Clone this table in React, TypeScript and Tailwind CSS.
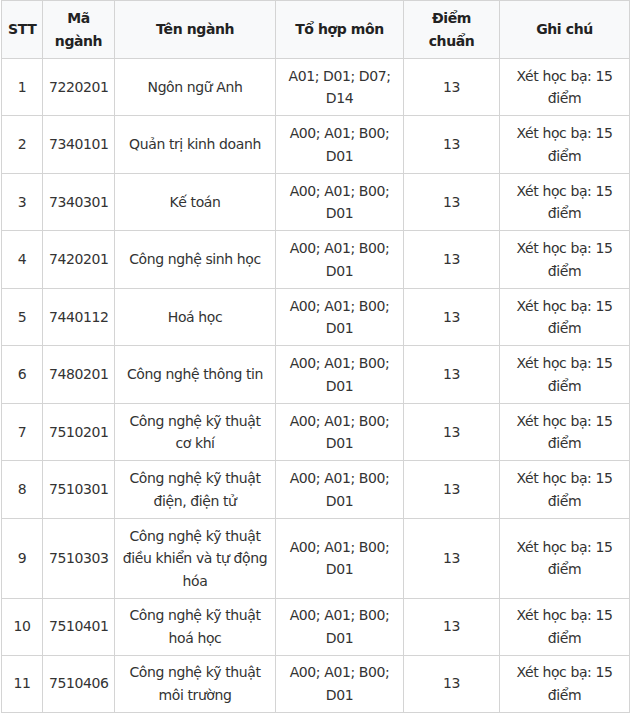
import React from 'react';

type Row = {
  stt: string;
  code: string;
  name: string[];
};

const rows: Row[] = [
  { stt: '1', code: '7220201', name: ['Ngôn ngữ Anh'] },
  { stt: '2', code: '7340101', name: ['Quản trị kinh doanh'] },
  { stt: '3', code: '7340301', name: ['Kế toán'] },
  { stt: '4', code: '7420201', name: ['Công nghệ sinh học'] },
  { stt: '5', code: '7440112', name: ['Hoá học'] },
  { stt: '6', code: '7480201', name: ['Công nghệ thông tin'] },
  { stt: '7', code: '7510201', name: ['Công nghệ kỹ thuật', 'cơ khí'] },
  { stt: '8', code: '7510301', name: ['Công nghệ kỹ thuật', 'điện, điện tử'] },
  { stt: '9', code: '7510303', name: ['Công nghệ kỹ thuật', 'điều khiển và tự động', 'hóa'] },
  { stt: '10', code: '7510401', name: ['Công nghệ kỹ thuật', 'hoá học'] },
  { stt: '11', code: '7510406', name: ['Công nghệ kỹ thuật', 'môi trường'] },
];

function Lines({ lines }: { lines: string[] }) {
  return (
    <>
      {lines.map((l, i) => (
        <span key={i} className="block whitespace-nowrap">
          {l}
        </span>
      ))}
    </>
  );
}

const th = 'border border-[#d4d4d4] bg-[#f8f9fa] px-[6px] py-[6px] text-center align-middle font-bold text-[#222]';
const tdBase = 'border border-[#d4d4d4] px-[6px] text-center align-middle';
// source rows alternate 57/58px, so even rows get half a pixel more padding
const padOdd = 'py-[5.5px]';
const padEven = 'py-[6px]';

export default function App() {
  return (
    <div className="bg-white w-[630px] h-[714px] pl-[1px]" style={{ fontFamily: '"DejaVu Sans", Verdana, sans-serif' }}>
      <table className="table-fixed border-collapse w-[628px] text-[14px] leading-[22.5px] text-[#333] tracking-[-0.4px]">
        <colgroup>
          <col className="w-[41px]" />
          <col className="w-[72px]" />
          <col className="w-[161px]" />
          <col className="w-[128px]" />
          <col className="w-[96px]" />
          <col className="w-[130px]" />
        </colgroup>
        <thead>
          <tr>
            <th className={th}>STT</th>
            <th className={th}>
              <Lines lines={['Mã', 'ngành']} />
            </th>
            <th className={th}>Tên ngành</th>
            <th className={th}>Tổ hợp môn</th>
            <th className={th}>
              <Lines lines={['Điểm', 'chuẩn']} />
            </th>
            <th className={th}>Ghi chú</th>
          </tr>
        </thead>
        <tbody>
          {rows.map((r, i) => {
            const td = `${tdBase} ${i % 2 === 1 && i < 8 ? padEven : padOdd}`;
            return (
              <tr key={r.stt}>
                <td className={td}>{r.stt}</td>
                <td className={td}>{r.code}</td>
                <td className={td}>
                  <Lines lines={r.name} />
                </td>
                <td className={td}>
                  <Lines lines={r.stt === '1' ? ['A01; D01; D07;', 'D14'] : ['A00; A01; B00;', 'D01']} />
                </td>
                <td className={td}>13</td>
                <td className={td}>
                  <Lines lines={['Xét học bạ: 15', 'điểm']} />
                </td>
              </tr>
            );
          })}
        </tbody>
      </table>
    </div>
  );
}
